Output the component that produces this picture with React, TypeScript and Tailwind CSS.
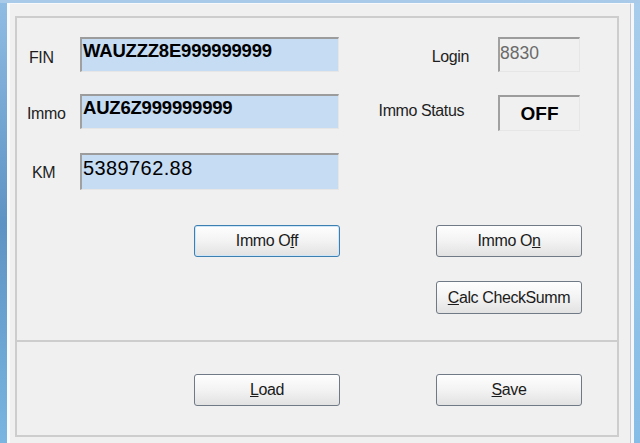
import React from "react";

function Btn({ children, active = false, className = "" }: { children: React.ReactNode; active?: boolean; className?: string }) {
  return (
    <button
      className={
        "w-[146px] h-[32px] rounded-[3px] border bg-gradient-to-b from-[#fefefe] via-[#f3f3f3] to-[#e2e2e2] text-[16px] leading-[18px] text-[#1b1b1b] tracking-[-0.4px] flex items-center justify-center " +
        (active ? "border-[#3c7fb1] shadow-[inset_0_0_0_1px_#cfe6f8] " : "border-[#6f7a86] ") +
        className
      }
    >
      {children}
    </button>
  );
}

export default function App() {
  const box = "border-t-2 border-l-2 border-t-[#9c9c9c] border-l-[#a0a0a0] border-r border-b border-r-[#e6e6e6] border-b-[#e6e6e6]";
  const label = "text-[16px] leading-[18px] tracking-[-0.4px]";

  return (
    <div className="w-[640px] h-[443px] overflow-hidden flex flex-col bg-gradient-to-b from-[#a9cbe9] to-[#7fb3de] font-['Liberation_Sans',Arial,sans-serif] text-[#1e1e1e]">
      {/* title bar edge */}
      <div className="h-[3px]" />
      <div className="flex flex-1 min-h-0">
        {/* left frame */}
        <div className="w-[7px] bg-gradient-to-b from-[#8fbce3] via-[#5d93c4] to-[#79b5e0]" />

        {/* client area */}
        <div className="flex-1 flex flex-col bg-[#f0f0f0] border-l-[3px] border-l-[#f8f9fa] border-t border-t-[#f8f9fa] border-r border-r-[#c3c9d0] pl-[5px] pt-[12px] pr-[11px]">
          {/* main panel */}
          <div className="h-[326px] border-2 border-[#cdcdcd] flex flex-col">
            {/* FIN row */}
            <div className="flex items-start mt-[19px]">
              <div className={"w-[63px] pl-[12px] mt-[12px] " + label}>FIN</div>
              <div className={"w-[259px] h-[35px] bg-[#c6dcf2] pl-[1px] pt-[1px] " + box}>
                <span className="text-[18.5px] leading-[20px] font-bold text-black tracking-[-0.2px]">WAUZZZ8E999999999</span>
              </div>
              <div className={"w-[130px] text-right mt-[11px] " + label}>Login</div>
              <div className={"ml-[29px] w-[82px] h-[35px] bg-[#f0f0f0] pt-[3px] " + box}>
                <span className="text-[17.5px] leading-[20px] text-[#6a6a6a]">8830</span>
              </div>
            </div>

            {/* Immo row */}
            <div className="flex items-start mt-[22px]">
              <div className={"w-[63px] pl-[10px] mt-[11px] " + label}>Immo</div>
              <div className={"w-[259px] h-[35px] bg-[#c6dcf2] pl-[1px] pt-[1px] " + box}>
                <span className="text-[18.5px] leading-[20px] font-bold text-black tracking-[-0.2px]">AUZ6Z999999999</span>
              </div>
              <div className={"w-[130px] text-right pr-[5px] mt-[8px] " + label}>Immo Status</div>
              <div className={"ml-[29px] mt-[1px] w-[82px] h-[36px] bg-[#f0f0f0] flex items-center justify-center " + box}>
                <span className="text-[19px] leading-[20px] font-bold text-black">OFF</span>
              </div>
            </div>

            {/* KM row */}
            <div className="flex items-start mt-[22px]">
              <div className={"w-[63px] pl-[15px] mt-[11px] " + label}>KM</div>
              <div className={"w-[259px] h-[37px] bg-[#c6dcf2] pl-[1px] pt-[2px] " + box}>
                <span className="text-[20px] leading-[22px] tracking-[0.4px] text-black">5389762.88</span>
              </div>
            </div>

            {/* Immo buttons */}
            <div className="flex mt-[35px] pl-[177px] gap-[96px]">
              <Btn active>
                <span>
                  Immo O<span className="underline">f</span>f
                </span>
              </Btn>
              <Btn>
                <span>
                  Immo O<span className="underline">n</span>
                </span>
              </Btn>
            </div>

            <div className="flex mt-[24px] pl-[419px]">
              <Btn className="h-[33px]">
                <span>
                  <span className="underline">C</span>alc CheckSumm
                </span>
              </Btn>
            </div>
          </div>

          {/* bottom panel */}
          <div className="h-[95px] border-2 border-t-0 border-[#cdcdcd] flex">
            <div className="flex mt-[32px] pl-[177px] gap-[96px]">
              <Btn>
                <span>
                  <span className="underline">L</span>oad
                </span>
              </Btn>
              <Btn>
                <span>
                  <span className="underline">S</span>ave
                </span>
              </Btn>
            </div>
          </div>
        </div>

        {/* right frame */}
        <div className="w-[9px] border-l-[3px] border-l-[#f6f7f8] bg-gradient-to-b from-[#a8cdec] to-[#86bde6]" />
      </div>
    </div>
  );
}
